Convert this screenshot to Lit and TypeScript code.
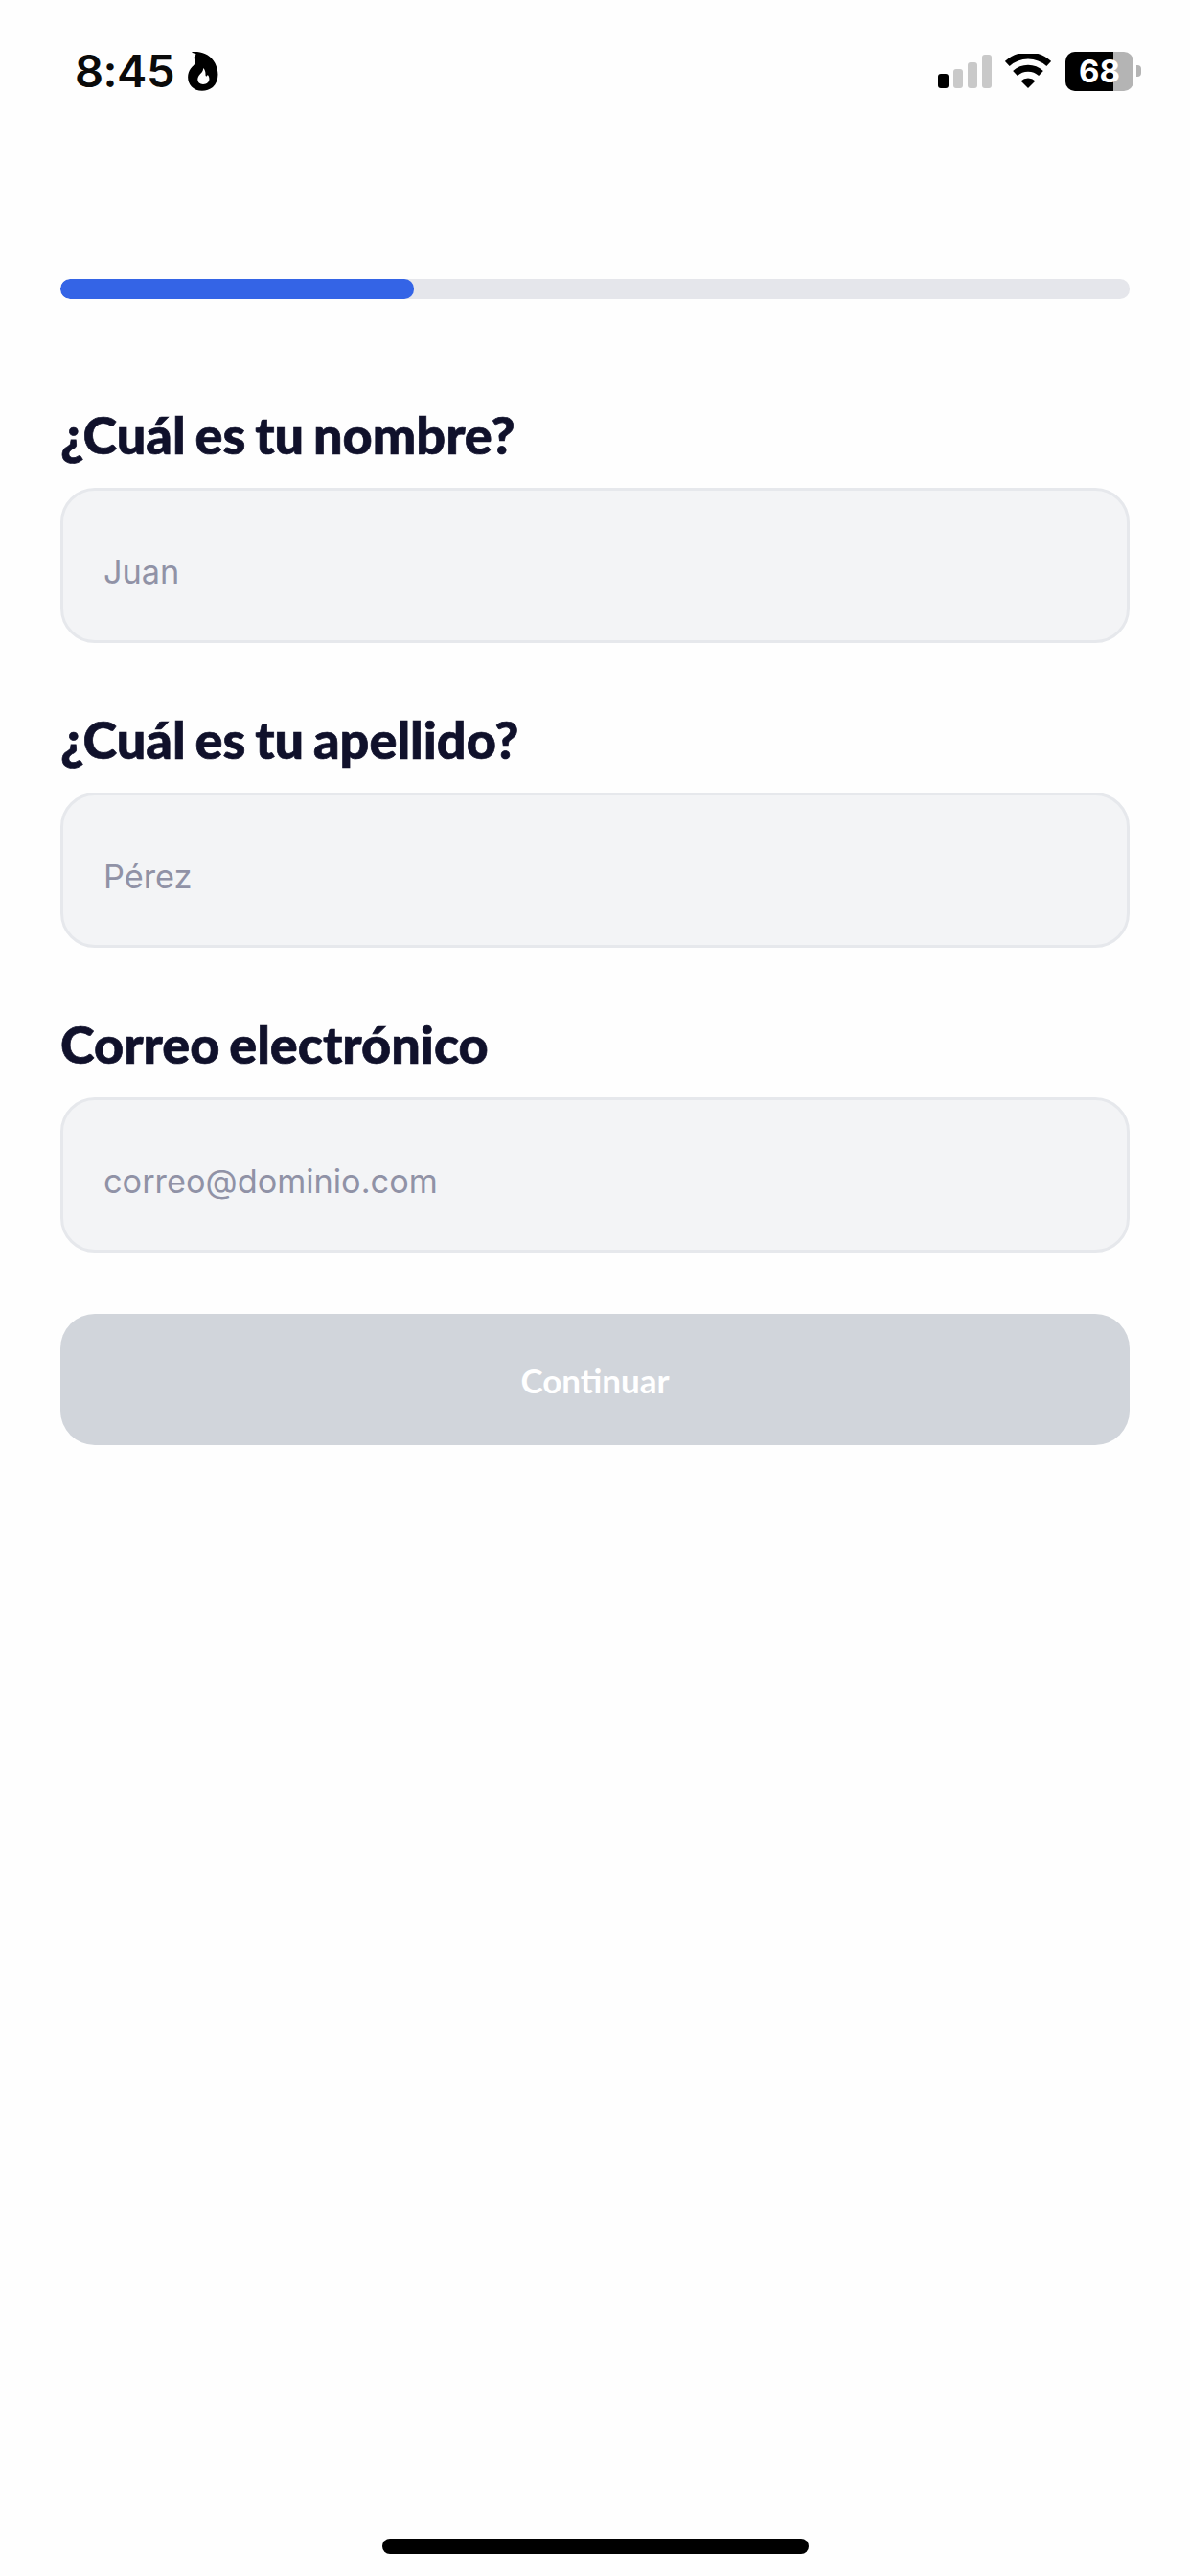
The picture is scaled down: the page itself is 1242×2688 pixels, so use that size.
import { LitElement, html, css } from 'lit';
import { customElement } from 'lit/decorators.js';

const FIELDS = [
  { label: '¿Cuál es tu nombre?', placeholder: 'Juan', type: 'text' },
  { label: '¿Cuál es tu apellido?', placeholder: 'Pérez', type: 'text' },
  { label: 'Correo electrónico', placeholder: 'correo@dominio.com', type: 'email' },
];

@customElement('app-root')
export class AppRoot extends LitElement {
  static styles = css`
    :host {
      display: flex;
      flex-direction: column;
      width: 1242px;
      height: 2688px;
      background: #fefefe;
      font-family: Inter, "Liberation Sans", sans-serif;
      overflow: hidden;
    }
    .status {
      display: flex;
      align-items: center;
      justify-content: space-between;
      height: 148px;
      padding: 0 51px 0 78px;
      box-sizing: border-box;
      flex: none;
    }
    .left { display: flex; align-items: center; gap: 14px; }
    .time {
      font-size: 47px;
      font-weight: 600;
      letter-spacing: -0.5px;
      line-height: 50px;
      color: #0a0a0a;
    }
    .right { display: flex; align-items: center; }
    .signal { display: flex; align-items: flex-end; gap: 5px; height: 35px; margin-right: 14px; }
    .signal i { display: block; width: 10px; border-radius: 3px; background: #c9c9c9; }
    .signal i.on { background: #000; width: 11px; }
    .battery {
      position: relative;
      display: flex;
      align-items: center;
      justify-content: center;
      width: 71px;
      height: 41px;
      margin-left: 15px;
      border-radius: 10px;
      overflow: hidden;
      background: #b4b4b4;
      color: #fff;
      font-size: 33px;
      font-weight: 700;
    }
    .battery .charge { position: absolute; left: 0; top: 0; bottom: 0; background: #000; }
    .battery span { position: relative; }
    .cap { width: 5px; height: 12px; margin-left: 3px; border-radius: 0 4px 4px 0; background: #b4b4b4; }

    main {
      display: flex;
      flex-direction: column;
      padding: 143px 63px 0 63px;
    }
    .track { height: 21px; border-radius: 10px; background: #e5e6eb; overflow: hidden; flex: none; }
    .fill { height: 100%; border-radius: 10px; background: #3464e6; }
    form { display: flex; flex-direction: column; gap: 64px; margin-top: 105px; }
    .field { display: flex; flex-direction: column; gap: 18px; }
    label {
      font-family: Lato, "Noto Sans", sans-serif;
      font-size: 54px;
      font-weight: 900;
      word-spacing: -3px;
      line-height: 74px;
      color: #10112b;
      -webkit-text-stroke: 0.7px #10112b;
    }
    input {
      display: block;
      box-sizing: border-box;
      width: 100%;
      height: 162px;
      padding: 12px 42px 0;
      border: 3px solid #e6e8ec;
      border-radius: 36px;
      background: #f3f4f6;
      font: 400 34.300px Inter, "Liberation Sans", sans-serif;
      outline: none;
    }
    input::placeholder { color: #9092a6; opacity: 1; }
    button {
      height: 137px;
      border: none;
      border-radius: 36px;
      background: #d1d5db;
      color: #fff;
      font-family: Lato, "Noto Sans", sans-serif;
      font-size: 35px;
      font-weight: 700;
    }
    .home {
      width: 445px;
      height: 16px;
      margin: auto auto 23px;
      border-radius: 8px;
      background: #000;
      flex: none;
    }
  `;

  render() {
    return html`
      <div class="status">
        <div class="left">
          <span class="time">8:45</span>
          <svg width="32" height="41" viewBox="0 0 32 41">
            <path fill="#000" fill-rule="evenodd" d="M4 0C14 -1 24 3 28.500 12C33 21 32.500 31 26 37C20 42 9 42 4 36.500C-1 31 -1 23 3 17.500C5 15 7 14 7.500 11.500C8 9 6 7 7 5C7.500 3.500 9 3 8.500 2.500C7.500 1.500 5 1.500 4 0ZM16 17C16.500 21 13 22.500 11 26C9 30 11.500 34 16 34C21 34 23.500 30 22 26C21.500 24.500 20.500 23.500 20 25C19.500 26 18.500 25.500 18.500 24C18.500 21 18 18.500 16 17Z"/>
          </svg>
        </div>
        <div class="right">
          <div class="signal">
            <i class="on" style="height:15px"></i>
            <i style="height:20px"></i>
            <i style="height:27px"></i>
            <i style="height:35px"></i>
          </div>
          <svg width="48" height="36" viewBox="0 0 48 36" fill="none" stroke="#000" stroke-width="7">
            <path d="M2.300 10.500A32 32 0 0 1 45.700 10.500"/>
            <path d="M10.500 20.500A20 20 0 0 1 37.500 20.500"/>
            <path stroke="none" fill="#000" d="M24 36L16.500 28.500A11 11 0 0 1 31.500 28.500Z"/>
          </svg>
          <div class="battery">
            <div class="charge" style="width:${68 + 2}%"></div>
            <span>68</span>
          </div>
          <div class="cap"></div>
        </div>
      </div>
      <main>
        <div class="track"><div class="fill" style="width:${(369 / 1115) * 100}%"></div></div>
        <form>
          ${FIELDS.map(
            (f) => html`
              <div class="field">
                <label>${f.label}</label>
                <input type=${f.type} placeholder=${f.placeholder} />
              </div>
            `
          )}
          <button type="button" disabled>Continuar</button>
        </form>
      </main>
      <div class="home"></div>
    `;
  }
}
